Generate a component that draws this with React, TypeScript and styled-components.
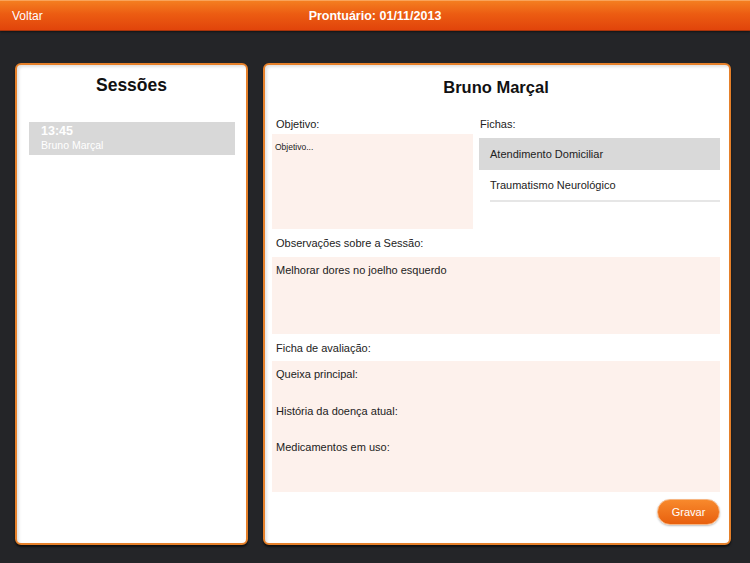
import styled, { createGlobalStyle } from "styled-components";

const GlobalSld = createGlobalStyle`
    html, body {
        margin: 0;
        padding: 0;
        background: #242528;
        font-family: "Liberation Sans", Arial, sans-serif;
    }
`;

const fichas = ["Atendimento Domiciliar", "Traumatismo Neurológico"];
const perguntas = ["Queixa principal:", "História da doença atual:", "Medicamentos em uso:"];

function App() {
    return (
        <PageSld>
            <GlobalSld />
            <TopBarSld>
                <VoltarSld>Voltar</VoltarSld>
                <TopTitleSld>Prontuário: 01/11/2013</TopTitleSld>
            </TopBarSld>
            <MainSld>
                <PanelSld $width="233px">
                    <PanelTitleSld $size="17.5px" $top="8px">Sessões</PanelTitleSld>
                    <SessionSld>
                        <SessionTimeSld>13:45</SessionTimeSld>
                        <SessionNameSld>Bruno Marçal</SessionNameSld>
                    </SessionSld>
                </PanelSld>
                <PanelSld $width="468px" $pad="0 9px 0 7px">
                    <PanelTitleSld $size="16.5px" $top="10px">Bruno Marçal</PanelTitleSld>
                    <TopGridSld>
                        <div>
                            <LabelSld>Objetivo:</LabelSld>
                            <FieldSld $height="95px" $small>Objetivo...</FieldSld>
                        </div>
                        <div>
                            <LabelSld $indent="1px">Fichas:</LabelSld>
                            <FichaListSld>
                                {fichas.map((f, i) => (
                                    <FichaSld key={f} $selected={i === 0}>{f}</FichaSld>
                                ))}
                            </FichaListSld>
                        </div>
                    </TopGridSld>
                    <LabelSld $top="7px">Observações sobre a Sessão:</LabelSld>
                    <FieldSld $height="77px">Melhorar dores no joelho esquerdo</FieldSld>
                    <LabelSld $top="7px">Ficha de avaliação:</LabelSld>
                    <FieldSld $height="131px" $top="6px">
                        {perguntas.map((p) => (
                            <PerguntaSld key={p}>{p}</PerguntaSld>
                        ))}
                    </FieldSld>
                    <ActionsSld>
                        <GravarSld>Gravar</GravarSld>
                    </ActionsSld>
                </PanelSld>
            </MainSld>
        </PageSld>
    );
}

const PageSld = styled.div`
    width: 750px;
    height: 563px;
    background: #242528;
    overflow: hidden;
`;

const TopBarSld = styled.div`
    height: 31px;
    box-sizing: border-box;
    display: flex;
    align-items: center;
    justify-content: center;
    position: relative;
    background: linear-gradient(#f47e20 0%, #ec5c12 45%, #e1440b 100%);
    border-top: 1px solid #f9a35a;
    border-bottom: 1px solid #a8330a;
    box-shadow: 0 1px 2px rgba(0, 0, 0, 0.5);
`;

const VoltarSld = styled.div`
    position: absolute;
    left: 12px;
    top: 8px;
    color: #fff;
    font-size: 12px;
`;

const TopTitleSld = styled.div`
    color: #fff;
    font-size: 12.5px;
    font-weight: bold;
`;

const MainSld = styled.div`
    display: flex;
    gap: 15px;
    padding: 32px 0 0 15px;
`;

const PanelSld = styled.div<{ $width: string; $pad?: string }>`
    width: ${(p) => p.$width};
    height: 482px;
    box-sizing: border-box;
    background: #fff;
    border: 2px solid #e5802a;
    border-radius: 6px;
    padding: ${(p) => p.$pad || "0"};
    box-shadow: inset 2px 2px 3px rgba(0, 0, 0, 0.12), 0 2px 2px rgba(0, 0, 0, 0.6);
    display: flex;
    flex-direction: column;
`;

const PanelTitleSld = styled.div<{ $size: string; $top: string }>`
    margin-top: ${(p) => p.$top};
    line-height: 24px;
    text-align: center;
    font-size: ${(p) => p.$size};
    font-weight: bold;
    color: #111;
`;

const SessionSld = styled.div`
    margin: 25px 11px 0 12px;
    height: 33px;
    background: #d8d8d8;
    padding: 2px 12px 0;
    box-sizing: border-box;
    color: #fff;
`;

const SessionTimeSld = styled.div`
    font-size: 12.5px;
    font-weight: bold;
    line-height: 15px;
`;

const SessionNameSld = styled.div`
    font-size: 10.5px;
    line-height: 13px;
`;

const TopGridSld = styled.div`
    display: grid;
    grid-template-columns: 201px 1fr;
    column-gap: 6px;
    margin-top: 18px;
`;

const LabelSld = styled.div<{ $top?: string; $indent?: string }>`
    margin-top: ${(p) => p.$top || "0"};
    padding-left: ${(p) => p.$indent || "4px"};
    font-size: 11px;
    line-height: 14px;
    color: #222;
`;

const FieldSld = styled.div<{ $height: string; $small?: boolean; $top?: string }>`
    margin-top: ${(p) => p.$top || (p.$small ? "3px" : "7px")};
    height: ${(p) => p.$height};
    box-sizing: border-box;
    background: #fdf1ec;
    padding: ${(p) => (p.$small ? "6px 3px" : "6px 4px")};
    font-size: ${(p) => (p.$small ? "8.5px" : "11px")};
    line-height: 14px;
    color: #222;
`;

const PerguntaSld = styled.div`
    height: 36.5px;
`;

const FichaListSld = styled.div`
    margin-top: 7px;
`;

const FichaSld = styled.div<{ $selected?: boolean }>`
    height: 32px;
    box-sizing: border-box;
    display: flex;
    align-items: center;
    font-size: 11px;
    color: #222;
    background: ${(p) => (p.$selected ? "#d9d9d9" : "transparent")};
    border-bottom: ${(p) => (p.$selected ? "none" : "2px solid #e6e6e6")};
    margin-left: ${(p) => (p.$selected ? "0" : "11px")};
    padding-left: ${(p) => (p.$selected ? "11px" : "0")};
`;

const ActionsSld = styled.div`
    display: flex;
    justify-content: flex-end;
    margin-top: 7px;
`;

const GravarSld = styled.button`
    width: 63px;
    height: 26px;
    border-radius: 13px;
    border: 1px solid #f6b582;
    background: linear-gradient(#f8892c, #e8600e);
    color: #fff;
    font-family: "Liberation Sans", Arial, sans-serif;
    font-size: 11px;
    padding: 0;
    box-shadow: 0 1px 2px rgba(0, 0, 0, 0.25);
`;

export default App;
